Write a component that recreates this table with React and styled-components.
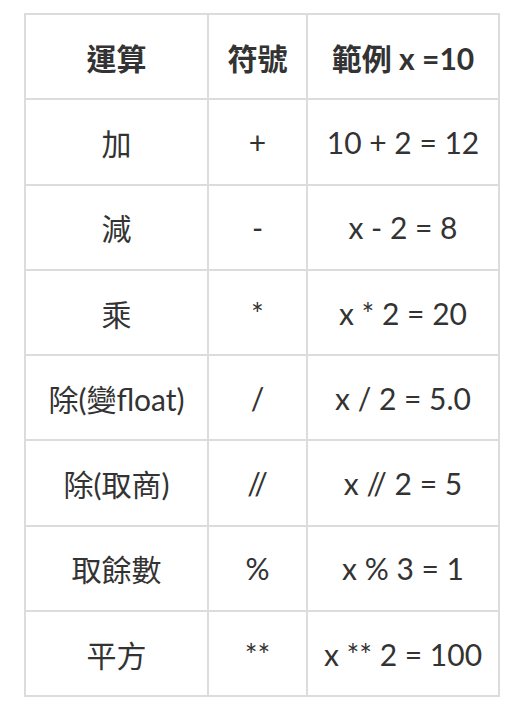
import React from "react";
import styled, { createGlobalStyle } from "styled-components";

const GlobalStyle = createGlobalStyle`
  html, body {
    margin: 0;
    padding: 0;
    background: #ffffff;
  }
  body {
    font-family: Lato, "Noto Sans CJK TC", sans-serif;
    color: #333333;
  }
`;

const rows = [
  ["加", "+", "10 + 2 = 12"],
  ["減", "-", "x - 2 = 8"],
  ["乘", "*", "x * 2 = 20"],
  ["除(變float)", "/", "x / 2 = 5.0"],
  ["除(取商)", "//", "x // 2 = 5"],
  ["取餘數", "%", "x % 3 = 1"],
  ["平方", "**", "x ** 2 = 100"],
];

const Page = styled.div`
  padding: 13px 0 0 24px;
`;

const Table = styled.table`
  border-collapse: collapse;
  table-layout: fixed;
  width: 474px;
`;

const Col = styled.col`
  width: ${(p) => p.$w}px;
`;

const Row = styled.tr`
  height: 85.3px;
`;

const Cell = styled.td`
  border: 2px solid #dcdcdc;
  text-align: center;
  vertical-align: middle;
  padding: 0;
  font-size: 30px;
  font-weight: ${(p) => (p.$head ? 700 : 400)};
  font-family: Lato, "Noto Sans CJK TC", sans-serif;
  color: #333333;
  white-space: nowrap;
`;

export default function App() {
  return (
    <>
      <GlobalStyle />
      <Page>
        <Table>
          <colgroup>
            <Col $w={183} />
            <Col $w={99} />
            <Col $w={192} />
          </colgroup>
          <tbody>
            <Row>
              <Cell $head>運算</Cell>
              <Cell $head>符號</Cell>
              <Cell $head>範例 x =10</Cell>
            </Row>
            {rows.map((r) => (
              <Row key={r[0]}>
                <Cell>{r[0]}</Cell>
                <Cell>{r[1]}</Cell>
                <Cell>{r[2]}</Cell>
              </Row>
            ))}
          </tbody>
        </Table>
      </Page>
    </>
  );
}
